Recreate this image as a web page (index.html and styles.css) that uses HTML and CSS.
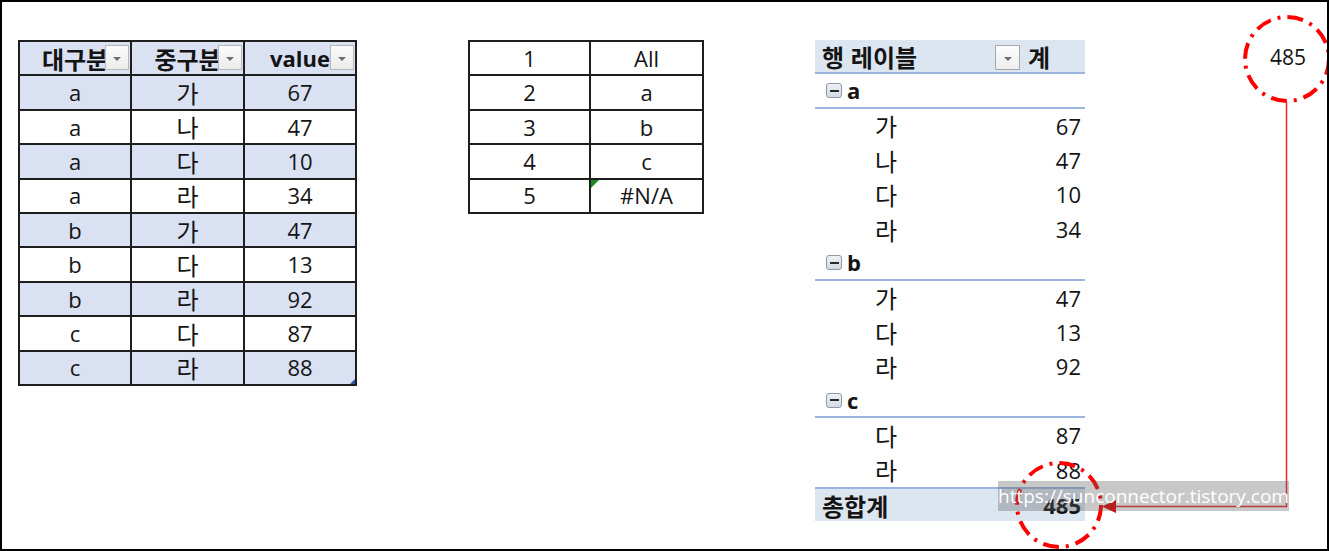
FILE: index.html
```html
<!DOCTYPE html>
<html lang="ko">
<head>
<meta charset="utf-8">
<title>피벗 예시</title>
<link rel="stylesheet" href="styles.css">
</head>
<body>
<div class="sheet">
  <div class="content">
    <div class="grid src">
      <div class="cell hd blue ko">대구분<span class="dd"><i></i></span></div>
      <div class="cell hd blue ko">중구분<span class="dd"><i></i></span></div>
      <div class="cell hd blue">value<span class="dd"><i></i></span></div>

      <div class="cell blue">a</div><div class="cell blue ko">가</div><div class="cell blue">67</div>
      <div class="cell">a</div><div class="cell ko">나</div><div class="cell">47</div>
      <div class="cell blue">a</div><div class="cell blue ko">다</div><div class="cell blue">10</div>
      <div class="cell">a</div><div class="cell ko">라</div><div class="cell">34</div>
      <div class="cell blue">b</div><div class="cell blue ko">가</div><div class="cell blue">47</div>
      <div class="cell">b</div><div class="cell ko">다</div><div class="cell">13</div>
      <div class="cell blue">b</div><div class="cell blue ko">라</div><div class="cell blue">92</div>
      <div class="cell">c</div><div class="cell ko">다</div><div class="cell">87</div>
      <div class="cell blue">c</div><div class="cell blue ko">라</div><div class="cell blue last">88<span class="handle"></span></div>
    </div>

    <div class="grid crit">
      <div class="cell">1</div><div class="cell">All</div>
      <div class="cell">2</div><div class="cell">a</div>
      <div class="cell">3</div><div class="cell">b</div>
      <div class="cell">4</div><div class="cell">c</div>
      <div class="cell">5</div><div class="cell err">#N/A<span class="flag"></span></div>
    </div>

    <div class="pivot">
      <div class="prow phead">
        <span class="plabel ko">행 레이블</span>
        <span class="pdd"><i></i></span>
        <span class="pval left ko">계</span>
      </div>
      <div class="prow pgroup"><span class="minus"><i></i></span><span class="plabel">a</span></div>
      <div class="prow pitem"><span class="plabel ko">가</span><span class="pval">67</span></div>
      <div class="prow pitem"><span class="plabel ko">나</span><span class="pval">47</span></div>
      <div class="prow pitem"><span class="plabel ko">다</span><span class="pval">10</span></div>
      <div class="prow pitem"><span class="plabel ko">라</span><span class="pval">34</span></div>
      <div class="prow pgroup"><span class="minus"><i></i></span><span class="plabel">b</span></div>
      <div class="prow pitem"><span class="plabel ko">가</span><span class="pval">47</span></div>
      <div class="prow pitem"><span class="plabel ko">다</span><span class="pval">13</span></div>
      <div class="prow pitem"><span class="plabel ko">라</span><span class="pval">92</span></div>
      <div class="prow pgroup"><span class="minus"><i></i></span><span class="plabel">c</span></div>
      <div class="prow pitem"><span class="plabel ko">다</span><span class="pval">87</span></div>
      <div class="prow pitem"><span class="plabel ko">라</span><span class="pval">88</span></div>
      <div class="prow ptotal"><span class="plabel ko">총합계</span><span class="pval">485</span></div>
    </div>

    <div class="lone">485</div>
  </div>

  <svg class="annot" width="1329" height="551" viewBox="0 0 1329 551">
    <circle cx="1287" cy="59" r="42" fill="none" stroke="#ff0000" stroke-width="4" stroke-dasharray="16 7 3 7"/>
    <circle cx="1059" cy="505" r="42" fill="none" stroke="#ff0000" stroke-width="4" stroke-dasharray="16 7 3 7"/>
    <polyline points="1286.5,102 1286.5,506.5 1114,506.5" fill="none" stroke="#e8262b" stroke-width="1.5"/>
    <polygon points="1102,506.5 1116,500 1116,513" fill="#e00000"/>
  </svg>

  <div class="watermark">https://sunconnector.tistory.com</div>
</div>
</body>
</html>
```

FILE: styles.css
```css
html, body {
  margin: 0;
  padding: 0;
  background: #ffffff;
}

body {
  font-family: "Open Sans", "Noto Sans CJK KR", sans-serif;
  color: #141414;
}

.sheet {
  position: relative;
  width: 1329px;
  height: 551px;
  box-sizing: border-box;
  border: 2px solid #000;
  background: #fff;
  overflow: hidden;
}

.content {
  display: flex;
  align-items: flex-start;
  gap: 111px;
  padding: 38px 0 0 16px;
}

/* spreadsheet grids */
.grid {
  display: grid;
  background: #1e1e1e;
  padding: 2px;
  gap: 2px;
  grid-auto-rows: 32.4px;
}

.src {
  grid-template-columns: 110px 111px 110px;
}

.crit {
  grid-template-columns: 119px 111px;
}

.cell {
  position: relative;
  display: flex;
  align-items: center;
  justify-content: center;
  background: #fff;
  font-size: 22px;
  line-height: 1.3;
  white-space: nowrap;
}

.ko {
  font-family: "Noto Sans CJK KR", sans-serif;
  font-size: 24px;
  line-height: 1.3;
}

.cell.blue {
  background: #d9e1f2;
}

.cell.hd {
  font-weight: 700;
}

.dd {
  position: absolute;
  right: 1px;
  top: 3px;
  width: 24px;
  height: 25px;
  box-sizing: border-box;
  border: 1px solid #b9b9b9;
  background: linear-gradient(#fbfbfb, #ececec);
  display: flex;
  align-items: center;
  justify-content: center;
}

.dd i,
.pdd i {
  display: block;
  width: 0;
  height: 0;
  border-left: 4px solid transparent;
  border-right: 4px solid transparent;
  border-top: 4px solid #6d6d6d;
  margin-top: 2px;
}

.handle {
  position: absolute;
  right: 0;
  bottom: 0;
  width: 0;
  height: 0;
  border-left: 5px solid transparent;
  border-bottom: 5px solid #2f56a8;
}

.flag {
  position: absolute;
  left: 0;
  top: 0;
  width: 0;
  height: 0;
  border-top: 8px solid #1f8a1f;
  border-right: 8px solid transparent;
}

/* pivot */
.pivot {
  width: 270px;
  display: flex;
  flex-direction: column;
}

.prow {
  height: 34.4px;
  box-sizing: border-box;
  display: flex;
  align-items: center;
  font-size: 22px;
  line-height: 1.3;
  white-space: nowrap;
}

.plabel {
  flex: 1;
}

.pval {
  width: 57px;
  text-align: right;
  padding-right: 4px;
  box-sizing: border-box;
}

.pval.left {
  text-align: left;
  padding-right: 0;
}

.phead {
  background: #dce6f1;
  border-bottom: 2px solid #9ab5df;
  font-weight: 700;
  padding-left: 7px;
}

.pdd {
  width: 25px;
  height: 25px;
  box-sizing: border-box;
  border: 1px solid #a9a9a9;
  background: linear-gradient(#fdfdfd, #eeeeee);
  display: flex;
  align-items: center;
  justify-content: center;
  margin-right: 8px;
  margin-top: 3px;
}

.pgroup {
  border-bottom: 2px solid #9ab5df;
  font-weight: 700;
  padding-left: 11px;
}

.minus {
  width: 16px;
  height: 15px;
  box-sizing: border-box;
  border: 1px solid #8c99aa;
  border-radius: 3px;
  background: linear-gradient(#eef1f5, #d5dbe3);
  display: flex;
  align-items: center;
  justify-content: center;
  margin-right: 5px;
}

.minus i {
  display: block;
  width: 9px;
  height: 2px;
  background: #2a2a2a;
}

.pitem {
  padding-left: 60px;
}

.ptotal {
  background: #dce6f1;
  border-top: 2px solid #9ab5df;
  font-weight: 700;
  padding-left: 7px;
}

.lone {
  margin-left: 74px;
  height: 34.4px;
  display: flex;
  align-items: center;
  font-size: 21px;
  line-height: 1.3;
}

/* overlays */
.annot {
  position: absolute;
  left: -2px;
  top: -2px;
  pointer-events: none;
}

.watermark {
  position: absolute;
  left: 996px;
  top: 479px;
  width: 291px;
  height: 30px;
  background: rgba(95, 95, 95, 0.34);
  color: #ffffff;
  font-family: "Open Sans", sans-serif;
  font-size: 19px;
  line-height: 30px;
  text-align: center;
  white-space: nowrap;
  overflow: hidden;
}
```
